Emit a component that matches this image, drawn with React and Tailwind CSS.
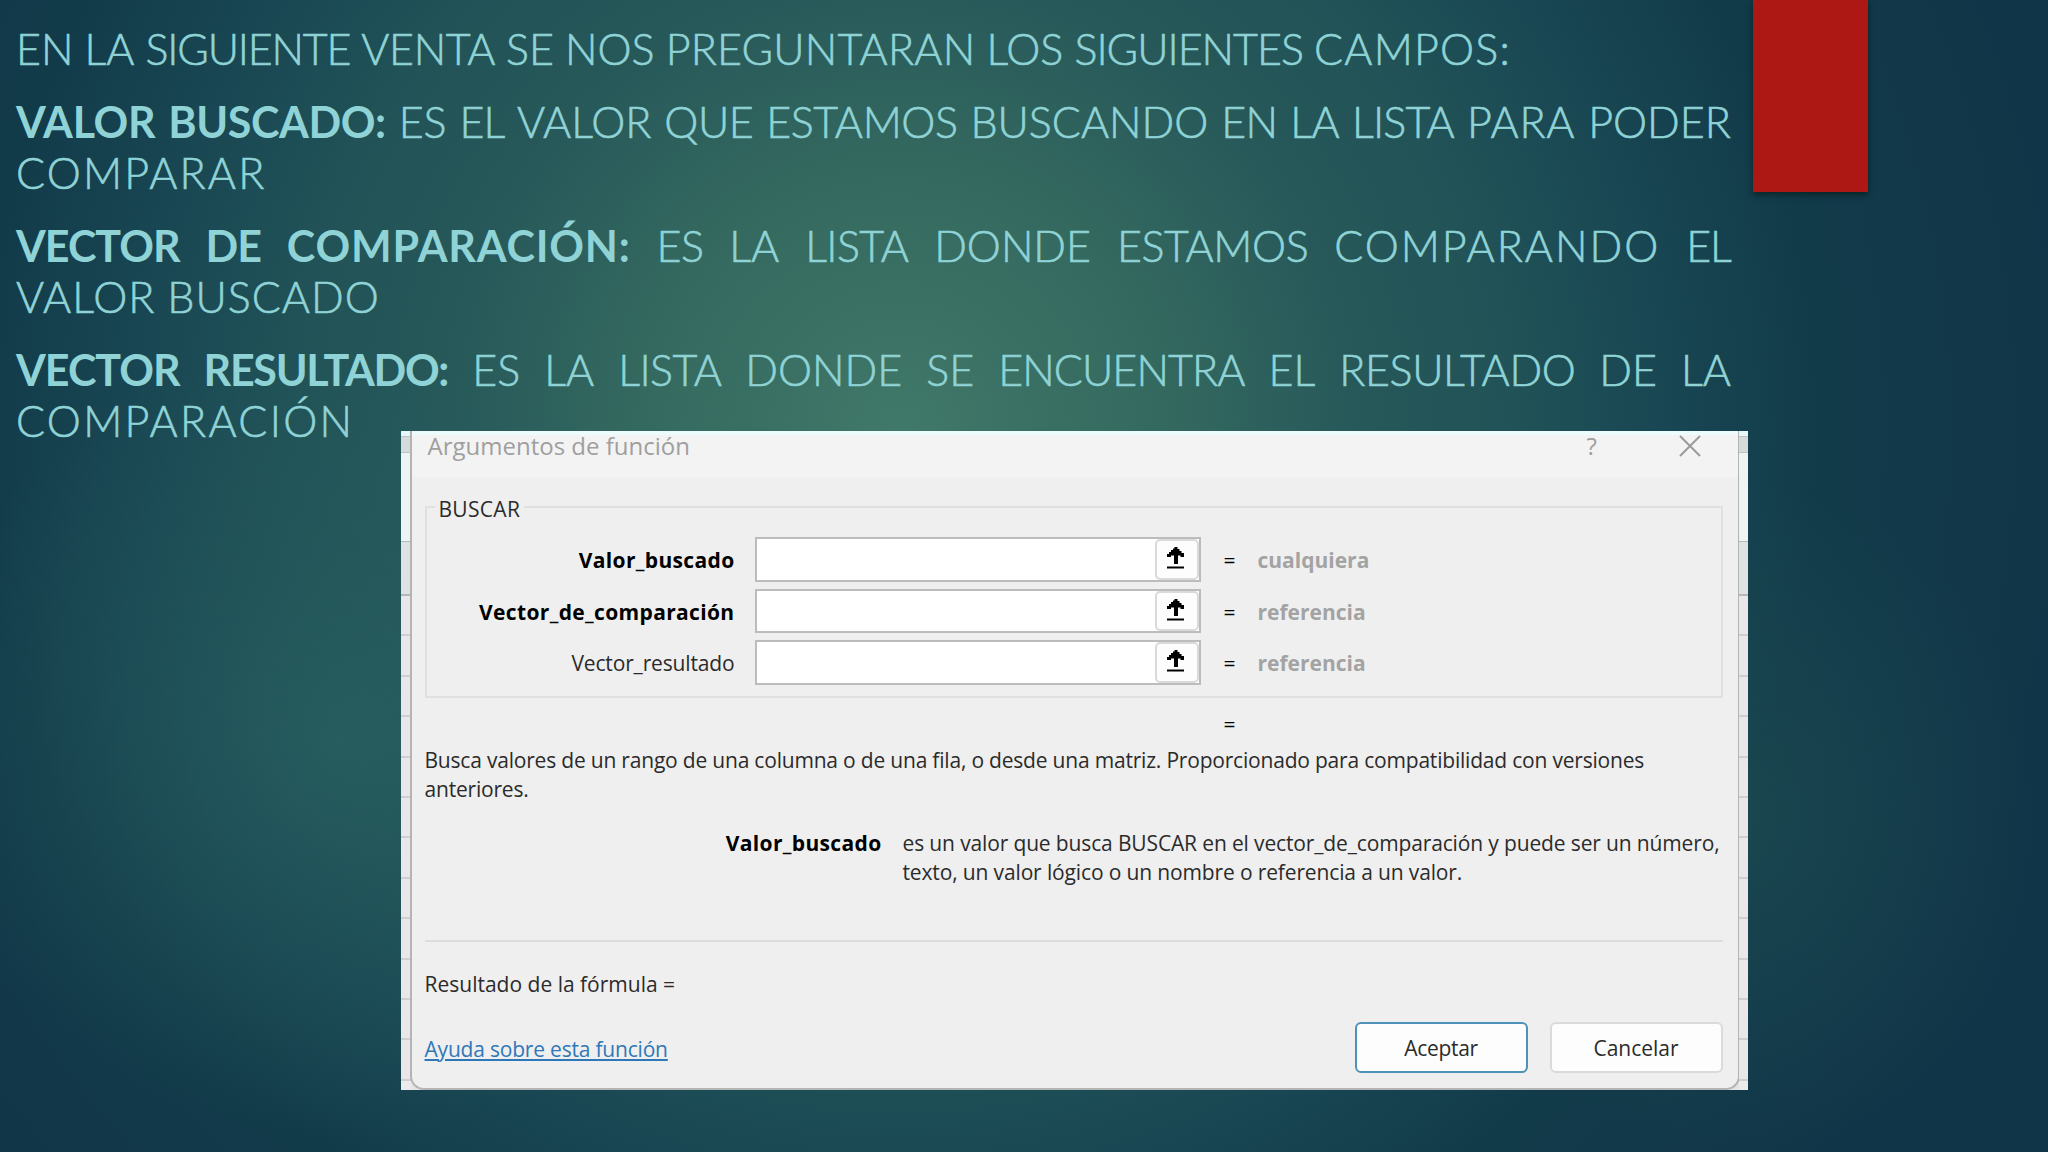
import React from 'react';

// each line is a list of [word, tracking, bold]
const paragraphs = [
  [
    [['EN', ''], ['LA', ''], ['SIGUIENTE', 'tracking-[-1.2px]'], ['VENTA', 'tracking-[-0.4px]'], ['SE', ''], ['NOS', ''], ['PREGUNTARAN', 'tracking-[0.2px]'], ['LOS', ''], ['SIGUIENTES', 'tracking-[-1px]'], ['CAMPOS:', 'tracking-[1.2px]']],
  ],
  [
    [['VALOR', 'tracking-[-0.3px]', true], ['BUSCADO:', 'tracking-[-0.4px]', true], ['ES', ''], ['EL', 'tracking-[-1px]'], ['VALOR', ''], ['QUE', 'tracking-[-0.4px]'], ['ESTAMOS', 'tracking-[-0.4px]'], ['BUSCANDO', ''], ['EN', 'tracking-[-0.6px]'], ['LA', 'tracking-[-0.6px]'], ['LISTA', 'tracking-[-0.8px]'], ['PARA', 'tracking-[0.8px]'], ['PODER', '']],
    [['COMPARAR', 'tracking-[2.2px]']],
  ],
  [
    [['VECTOR', 'tracking-[-1px]', true], ['DE', 'tracking-[-1px]', true], ['COMPARACIÓN:', 'tracking-[0.8px]', true], ['ES', 'tracking-[-0.6px]'], ['LA', ''], ['LISTA', 'tracking-[-0.6px]'], ['DONDE', ''], ['ESTAMOS', 'tracking-[-0.4px]'], ['COMPARANDO', 'tracking-[2px]'], ['EL', 'tracking-[-1px]']],
    [['VALOR', 'tracking-[1px]'], ['BUSCADO', 'tracking-[1px]']],
  ],
  [
    [['VECTOR', 'tracking-[-1px]', true], ['RESULTADO:', 'tracking-[-1.3px]', true], ['ES', ''], ['LA', ''], ['LISTA', 'tracking-[-0.6px]'], ['DONDE', ''], ['SE', ''], ['ENCUENTRA', 'tracking-[-0.9px]'], ['EL', ''], ['RESULTADO', 'tracking-[-0.4px]'], ['DE', ''], ['LA', '']],
    [['COMPARACIÓN', 'tracking-[2.3px]']],
  ],
];

const fields = [
  { label: 'Valor_buscado', value: 'cualquiera', required: true },
  { label: 'Vector_de_comparación', value: 'referencia', required: true },
  { label: 'Vector_resultado', value: 'referencia', required: false },
];

const SlideText = () => (
  <div className="flex h-[431px] w-[1731px] flex-col gap-[21px] pt-[23px] pl-[16px] font-['Lato',sans-serif] text-[43px] leading-[51.5px] font-light text-[#8fd3d6]">
    {paragraphs.map((lines, i) => (
      <div key={i}>
        {lines.map((words, j) => {
          const full = j === 0 && i > 0;
          return (
            <p key={j} className={`flex whitespace-nowrap ${full ? 'justify-between' : i === 0 ? 'w-[1495px] justify-between' : 'gap-[12px]'}`}>
              {words.map(([word, tracking, bold], k) => (
                <span key={k} className={`${tracking} ${bold ? 'font-bold' : '[-webkit-text-stroke:0.6px_#8fd3d6]'}`}>{word}</span>
              ))}
            </p>
          );
        })}
      </div>
    ))}
  </div>
);

const CollapseIcon = () => (
  <svg className="mr-[3px]" width="17" height="22" viewBox="0 0 17 22">
    <path d="M7.5 0h3v2h2v2h2v2H17v4h-3.5V8.5H11V17H7V8.5H4V10H0V7h2V5h2V3h2V1.500h1.500z" />
    <path d="M0 19.500h17v2H0z" />
  </svg>
);

// sliver of the spreadsheet that shows beside the dialog
const SheetEdge = () => (
  <div className="flex w-[10px] flex-col bg-[#ebebeb]">
    <div className="h-[5px] bg-[#e6f8fb]" />
    <div className="h-[17px] border-y border-[#bcc4c6] bg-[#d5dadb]" />
    <div className="h-[88px] bg-[#eef3f4]" />
    <div className="h-[55px] border-t border-b-2 border-[#b5b8b8] bg-[#dfe2e2]" />
    {Array.from({ length: 12 }).map((_, i) => (
      <div key={i} className="h-[40.4px] border-b-2 border-[#cfcfd1] bg-[#e9e7e9]" />
    ))}
  </div>
);

const ArgumentRow = ({ label, value, required }) => (
  <div className="flex h-[44.5px] items-center">
    <label className={`w-[308px] pt-[2px] text-right ${required ? 'font-bold tracking-[0.35px] text-black' : 'tracking-[-0.15px]'}`}>{label}</label>
    <div className="ml-[20px] flex h-full w-[446px] justify-end border-2 border-[#bcbcbc] bg-white">
      <button className="flex w-[44px] justify-center rounded-[5px] border-2 border-[#dadada] bg-[#fdfdfd] pt-[6px]">
        <CollapseIcon />
      </button>
    </div>
    <span className="ml-[23px] w-[34px] pt-[2px] text-black">=</span>
    <span className="pt-[2px] font-bold text-[#a3a3a3]">{value}</span>
  </div>
);

const Dialog = () => (
  <div className="ml-[401px] flex h-[659px] w-[1347px] bg-[#e4e4e5] font-['Open_Sans',sans-serif] text-[21px] leading-[28px] text-[#2b2b2b]">
    <SheetEdge />
    <div className="-mx-px flex w-[1330px] shrink-0 flex-col rounded-b-[14px] border-x-2 border-b-2 border-[#b4b4b4] bg-[#efefef]">
      <div className="flex h-[46px] justify-between border-t-4 border-[#ecfbfc] bg-[#f3f3f3] pr-[37px] pl-[16px] text-[24px] leading-[22px] text-[#9f9f9f]">
        <span>Argumentos de función</span>
        <div className="flex">
          <span className="w-[92px]">?</span>
          <svg width="22" height="22" viewBox="0 0 22 22" fill="none" stroke="#9a9a9a" strokeWidth="2">
            <path d="M1 1l20 20M21 1L1 21" />
          </svg>
        </div>
      </div>

      <div className="flex flex-col pr-[15px] pl-[13px]">
        <fieldset className="mt-[14px] h-[207px] border-2 border-[#e0e0e0]">
          <legend className="ml-[8px] px-[4px] pt-1 tracking-[0.3px]">BUSCAR</legend>
          <div className="flex flex-col gap-[7px] pt-[14px]">
            {fields.map((f) => <ArgumentRow key={f.label} {...f} />)}
          </div>
        </fieldset>

        <div className="mt-[12px] pl-[799px] text-black">=</div>

        <p className="mt-[8px] leading-[29px] tracking-[-0.2px]">
          Busca valores de un rango de una columna o de una fila, o desde una matriz. Proporcionado para compatibilidad con versiones<br />anteriores.
        </p>

        <div className="mt-[25px] flex leading-[29px]">
          <span className="w-[457px] text-right font-bold tracking-[0.35px] text-black">Valor_buscado</span>
          <p className="ml-[21px] tracking-[-0.14px] whitespace-nowrap">
            es un valor que busca BUSCAR en el vector_de_comparación y puede ser un número,<br />texto, un valor lógico o un nombre o referencia a un valor.
          </p>
        </div>

        <div className="mt-[53px] h-[2px] bg-[#dcdcdc]" />
        <p className="mt-[28px]">Resultado de la fórmula =</p>

        <div className="mt-[24px] flex h-[51px] items-center">
          <a className="mt-[2px] mr-auto tracking-[-0.2px] text-[#2f78b8] underline decoration-2 underline-offset-2">Ayuda sobre esta función</a>
          <button className="h-full w-[173px] rounded-[6px] border-2 border-[#4f92b8] bg-[#fdfdfd] tracking-[-0.3px]">Aceptar</button>
          <button className="ml-[22px] h-full w-[173px] rounded-[6px] border-2 border-[#dadada] bg-[#fdfdfd]">Cancelar</button>
        </div>
      </div>
    </div>
    <SheetEdge />
  </div>
);

const App = () => {
  return (
    <div className="h-[1152px] w-[2048px] overflow-hidden bg-[radial-gradient(ellipse_420px_400px_at_340px_740px,rgba(42,98,98,0.7)_0%,rgba(38,92,94,0.45)_45%,rgba(30,80,86,0)_100%),radial-gradient(ellipse_300px_340px_at_1740px_820px,rgba(32,80,84,0.55)_0%,rgba(30,76,80,0)_100%),radial-gradient(ellipse_1180px_1180px_at_900px_430px,#407869_0%,#34695f_22%,#27595a_38%,#205257_52%,#194753_64%,#123b4a_78%,#113548_100%)]">
      <div className="flex">
        <SlideText />
        <div className="ml-[22px] h-[192px] w-[115px] bg-[#ae1814] shadow-[0_3px_6px_rgba(0,20,10,0.55)]" />
      </div>
      <Dialog />
    </div>
  );
};

export default App;
